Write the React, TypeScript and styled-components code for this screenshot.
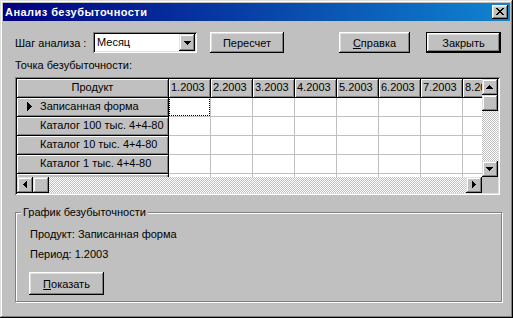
import React from "react";
import styled, { createGlobalStyle } from "styled-components";

const GlobalStyle = createGlobalStyle`
  html, body { margin: 0; padding: 0; background: #c0c0c0; }
  body { font-family: "Liberation Sans", Arial, sans-serif; font-size: 11px; color: #000; }
  * { box-sizing: border-box; }
`;

const raisedBtn = `
  background: #c0c0c0;
  box-shadow: inset -1px -1px #000, inset 1px 1px #fff, inset -2px -2px #808080, inset 2px 2px #dfdfdf;
`;

const raisedScroll = `
  background: #c0c0c0;
  box-shadow: inset -1px -1px #000, inset 1px 1px #dfdfdf, inset -2px -2px #808080, inset 2px 2px #fff;
`;

const sunken = `
  box-shadow: inset 1px 1px #808080, inset -1px -1px #fff, inset 2px 2px #000, inset -2px -2px #dfdfdf;
`;

const Window = styled.div`
  width: 513px;
  height: 318px;
  padding: 3px;
  display: flex;
  flex-direction: column;
  background: #c0c0c0;
  box-shadow: inset -1px -1px #000, inset 1px 1px #dfdfdf, inset -2px -2px #808080, inset 2px 2px #fff;
`;

const TitleBar = styled.div`
  height: 18px;
  display: flex;
  align-items: center;
  justify-content: space-between;
  padding: 0 2px 0 2px;
  background: linear-gradient(90deg, #000080, #1084d0);
`;

const TitleText = styled.span`
  color: #fff;
  font-weight: bold;
  font-size: 11px;
  line-height: 18px;
  letter-spacing: 0.45px;
  white-space: nowrap;
`;

const CloseButton = styled.div`
  width: 16px;
  height: 14px;
  display: flex;
  align-items: center;
  justify-content: center;
  padding: 0 1px 1px 0;
  ${raisedBtn}
`;

const Body = styled.div`
  flex: 1;
  display: flex;
  flex-direction: column;
  padding: 11px 0 0 12px;
`;

const Toolbar = styled.div`
  display: flex;
  align-items: center;
  height: 21px;
`;

const FieldLabel = styled.span`
  width: 78px;
  white-space: nowrap;
`;

const Combo = styled.div`
  width: 104px;
  height: 21px;
  padding: 2px;
  display: flex;
  align-items: stretch;
  background: #fff;
  ${sunken}
`;

const ComboText = styled.span`
  flex: 1;
  padding-left: 2px;
  line-height: 17px;
`;

const ComboButton = styled.div`
  width: 16px;
  display: flex;
  align-items: center;
  justify-content: center;
  ${raisedScroll}
`;

const PushButton = styled.div<{ $w: number; $ml: number; $h?: number; $mt?: number; $default?: boolean }>`
  width: ${(p) => p.$w}px;
  height: ${(p) => p.$h ?? 21}px;
  margin-left: ${(p) => p.$ml}px;
  margin-top: ${(p) => p.$mt ?? 0}px;
  display: flex;
  align-items: center;
  justify-content: center;
  white-space: nowrap;
  ${raisedBtn}
  ${(p) =>
    p.$default
      ? `box-shadow: inset 0 0 0 1px #000, inset -2px -2px #000, inset 2px 2px #fff, inset -3px -3px #808080, inset 3px 3px #dfdfdf;`
      : ""}
`;

const Mnemonic = styled.span`
  text-decoration: underline;
`;

const Caption = styled.div`
  margin-top: 6px;
  line-height: 13px;
`;

const GridFrame = styled.div`
  width: 485px;
  height: 118px;
  margin-top: 5px;
  padding: 2px;
  display: grid;
  grid-template-columns: 1fr 16px;
  grid-template-rows: 1fr 16px;
  background: #c0c0c0;
  ${sunken}
`;

const Viewport = styled.div`
  overflow: hidden;
  background: #c0c0c0;
`;

const Table = styled.div`
  display: grid;
  grid-template-columns: 152px repeat(8, 42px);
  grid-auto-rows: 19px;
  width: max-content;
`;

const FixedCell = styled.div<{ $center?: boolean }>`
  background: #c0c0c0;
  border-right: 1px solid #000;
  border-bottom: 1px solid #000;
  box-shadow: inset 1px 1px #fff, inset -1px -1px #808080;
  line-height: 16px;
  padding: 0 2px;
  white-space: nowrap;
  overflow: hidden;
  text-align: ${(p) => (p.$center ? "center" : "left")};
`;

const RowHeadCell = styled.div`
  background: #c0c0c0;
  border-right: 1px solid #000;
  border-bottom: 1px solid #000;
  box-shadow: inset 1px 1px #fff, inset -1px -1px #808080;
  display: flex;
  align-items: flex-start;
  padding-left: 10px;
  line-height: 16px;
  white-space: nowrap;
  overflow: hidden;
`;

const IndicatorSlot = styled.span`
  width: 13px;
  flex: none;
  display: flex;
  padding-top: 4px;
`;

const DataCell = styled.div<{ $focused?: boolean }>`
  position: relative;
  background: #fff;
  border-right: 1px solid #c0c0c0;
  border-bottom: 1px solid #c0c0c0;
  ${(p) =>
    p.$focused
      ? `&::after { content: ""; position: absolute; inset: -1px 0 0 0; border: 1px dotted #000; }`
      : ""}
`;

const VScroll = styled.div`
  display: flex;
  flex-direction: column;
`;

const HScroll = styled.div`
  display: flex;
`;

const ScrollButton = styled.div`
  width: 16px;
  height: 16px;
  flex: none;
  display: flex;
  align-items: center;
  justify-content: center;
  padding: 0 1px 1px 0;
  ${raisedScroll}
`;

const Track = styled.div`
  flex: 1;
  background: repeating-conic-gradient(#c0c0c0 0% 25%, #fff 0% 50%) 0 0 / 2px 2px;
`;

const Corner = styled.div`
  background: #c0c0c0;
`;

const GroupBox = styled.fieldset`
  margin: 11px 0 0 0;
  width: 487px;
  min-width: 0;
  border: 1px solid #808080;
  box-shadow: inset 1px 1px #fff, 1px 1px #fff;
  padding: 9px 14px 6px 14px;
  display: flex;
  flex-direction: column;
  align-items: flex-start;
`;

const Legend = styled.legend`
  margin-left: -9px;
  padding: 0 2px;
  line-height: 13px;
  background: #c0c0c0;
`;

const InfoLine = styled.div`
  line-height: 13px;
  margin-bottom: 7px;
  white-space: nowrap;
`;

type Dir = "up" | "down" | "left" | "right";

const Arrow = ({ dir }: { dir: Dir }) => {
  const rects: string[] = [];
  for (let i = 0; i < 4; i++) {
    const len = 7 - 2 * i;
    if (dir === "down") rects.push(`M${i} ${i}h${len}v1h-${len}z`);
    if (dir === "up") rects.push(`M${i} ${3 - i}h${len}v1h-${len}z`);
    if (dir === "right") rects.push(`M${i} ${i}h1v${len}h-1z`);
    if (dir === "left") rects.push(`M${3 - i} ${i}h1v${len}h-1z`);
  }
  const horiz = dir === "up" || dir === "down";
  return (
    <svg width={horiz ? 7 : 4} height={horiz ? 4 : 7} shapeRendering="crispEdges">
      <path d={rects.join("")} fill="#000" />
    </svg>
  );
};

const CloseGlyph = () => {
  const rows = ["xx....xx", ".xx..xx.", "..xxxx..", "...xx...", "..xxxx..", ".xx..xx.", "xx....xx"];
  const d = rows
    .map((r, y) =>
      r
        .split("")
        .map((c, x) => (c === "x" ? `M${x} ${y}h1v1h-1z` : ""))
        .join("")
    )
    .join("");
  return (
    <svg width={8} height={7} shapeRendering="crispEdges">
      <path d={d} fill="#000" />
    </svg>
  );
};

const RowIndicator = () => {
  const widths = [1, 2, 3, 4, 5, 4, 3, 2, 1];
  const d = widths.map((w, y) => `M0 ${y}h${w}v1h-${w}z`).join("");
  return (
    <svg width={5} height={9} shapeRendering="crispEdges">
      <path d={d} fill="#000" />
    </svg>
  );
};

const products = [
  "Записанная форма",
  "Каталог 100 тыс. 4+4-80",
  "Каталог 10 тыс. 4+4-80",
  "Каталог 1 тыс. 4+4-80",
  "Наклейка 100 тыс. 4+0",
];

const months = Array.from({ length: 8 }, (_, i) => `${i + 1}.2003`);

export default function App() {
  return (
    <>
      <GlobalStyle />
      <Window>
        <TitleBar>
          <TitleText>Анализ безубыточности</TitleText>
          <CloseButton>
            <CloseGlyph />
          </CloseButton>
        </TitleBar>
        <Body>
          <Toolbar>
            <FieldLabel>Шаг анализа :</FieldLabel>
            <Combo>
              <ComboText>Месяц</ComboText>
              <ComboButton>
                <Arrow dir="down" />
              </ComboButton>
            </Combo>
            <PushButton $w={74} $ml={13}>Пересчет</PushButton>
            <PushButton $w={71} $ml={55}>
              <Mnemonic>С</Mnemonic>правка
            </PushButton>
            <PushButton $w={75} $ml={16} $default>
              Закрыть
            </PushButton>
          </Toolbar>
          <Caption>Точка безубыточности:</Caption>
          <GridFrame>
            <Viewport>
              <Table>
                <FixedCell $center>Продукт</FixedCell>
                {months.map((m) => (
                  <FixedCell key={m}>{m}</FixedCell>
                ))}
                {products.map((p, r) => (
                  <React.Fragment key={p}>
                    <RowHeadCell>
                      <IndicatorSlot>{r === 0 ? <RowIndicator /> : null}</IndicatorSlot>
                      {p}
                    </RowHeadCell>
                    {months.map((m, c) => (
                      <DataCell key={m} $focused={r === 0 && c === 0} />
                    ))}
                  </React.Fragment>
                ))}
              </Table>
            </Viewport>
            <VScroll>
              <ScrollButton>
                <Arrow dir="up" />
              </ScrollButton>
              <ScrollButton />
              <Track />
              <ScrollButton>
                <Arrow dir="down" />
              </ScrollButton>
            </VScroll>
            <HScroll>
              <ScrollButton>
                <Arrow dir="left" />
              </ScrollButton>
              <ScrollButton />
              <Track />
              <ScrollButton>
                <Arrow dir="right" />
              </ScrollButton>
            </HScroll>
            <Corner />
          </GridFrame>
          <GroupBox>
            <Legend>График безубыточности</Legend>
            <InfoLine>Продукт: Записанная форма</InfoLine>
            <InfoLine>Период: 1.2003</InfoLine>
            <PushButton $w={75} $ml={-1} $mt={4} $h={23}>
              <Mnemonic>П</Mnemonic>оказать
            </PushButton>
          </GroupBox>
        </Body>
      </Window>
    </>
  );
}
